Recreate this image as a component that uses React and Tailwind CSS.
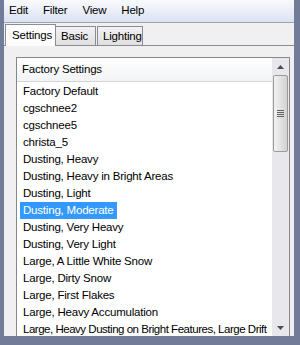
import React from "react";

const items = [
  "Factory Default",
  "cgschnee2",
  "cgschnee5",
  "christa_5",
  "Dusting, Heavy",
  "Dusting, Heavy in Bright Areas",
  "Dusting, Light",
  "Dusting, Moderate",
  "Dusting, Very Heavy",
  "Dusting, Very Light",
  "Large, A Little White Snow",
  "Large, Dirty Snow",
  "Large, First Flakes",
  "Large, Heavy Accumulation",
  "Large, Heavy Dusting on Bright Features, Large Drift",
];

export default function App() {
  return (
    <div
      className="w-[300px] h-[345px] bg-[#727c99] pl-[4px] pr-[6px] pb-[9px] flex flex-col overflow-hidden text-[11.5px] tracking-[-0.2px] text-black"
      style={{ fontFamily: '"Liberation Sans", Arial, sans-serif' }}
    >
      {/* menu bar */}
      <div className="h-[23px] shrink-0 flex items-center gap-[15px] pl-[5px] bg-gradient-to-b from-[#f9fafd] to-[#dbe2f3] border-b border-[#a0a4ad]">
        <span>Edit</span>
        <span>Filter</span>
        <span>View</span>
        <span>Help</span>
      </div>
      {/* tabs */}
      <div className="h-[23px] shrink-0 bg-[#f0f0f0] flex items-end pl-[1px] relative">
        <div className="absolute left-0 right-0 bottom-0 h-px bg-[#898c95]" />
        <div className="relative z-10 w-[51px] h-[22px] pl-[6px] flex items-center bg-[#fcfcfc] border border-b-0 border-[#898c95]">
          Settings
        </div>
        <div className="relative w-[40px] h-[19px] mb-px pl-[5px] pt-[2px] flex items-center bg-gradient-to-b from-[#f2f2f2] to-[#e0e0e0] border border-l-0 border-b-0 border-[#898c95]">
          Basic
        </div>
        <div className="relative w-[46px] h-[19px] mb-px ml-[1px] pl-[5px] pt-[2px] flex items-center bg-gradient-to-b from-[#f2f2f2] to-[#e0e0e0] border border-b-0 border-[#898c95]">
          Lighting
        </div>
      </div>
      {/* panel */}
      <div className="flex-1 bg-[#f0f0f0] pt-[11px] pl-[12px] pr-[4px] flex flex-col min-h-0">
        <div className="flex-1 bg-white border border-[#828790] border-b-0 flex min-h-0 overflow-hidden">
          <div className="flex-1 min-w-0 flex flex-col">
            <div className="h-[24px] shrink-0 flex items-center pl-[5px] bg-gradient-to-b from-[#ffffff] to-[#f2f3f5] border-b border-[#d5d5d5]">
              Factory Settings
            </div>
            <div className="pt-[1px] pl-[3px]">
              {items.map((t, i) => (
                <div key={t} className="h-[17px] flex items-center">
                  <span
                    className={
                      "px-[3px] h-[17px] leading-[17px] whitespace-nowrap " +
                      (t === "Dusting, Moderate" ? "bg-[#3399ff] text-white " : "") +
                      (i === items.length - 1 ? "tracking-[-0.48px]" : "")
                    }
                  >
                    {t}
                  </span>
                </div>
              ))}
            </div>
          </div>
          {/* scrollbar */}
          <div className="w-[17px] shrink-0 bg-[#e8e8ec] flex flex-col items-center">
            <div className="h-[17px] w-full flex items-center justify-center">
              <svg width="7" height="4" viewBox="0 0 7 4">
                <path d="M0 4 L3.5 0 L7 4 Z" fill="#4d4d4d" />
              </svg>
            </div>
            <div className="w-[15px] h-[77px] rounded-[2px] border border-[#9a9a9a] bg-gradient-to-r from-[#f2f2f2] via-[#e2e2e2] to-[#d2d2d2] flex items-center justify-center">
              <div className="flex flex-col gap-[1px]">
                <div className="w-[7px] h-px bg-[#606060]" />
                <div className="w-[7px] h-px bg-[#606060]" />
                <div className="w-[7px] h-px bg-[#606060]" />
                <div className="w-[7px] h-px bg-[#606060]" />
              </div>
            </div>
            <div className="flex-1" />
            <div className="h-[17px] w-full flex items-center justify-center">
              <svg width="7" height="4" viewBox="0 0 7 4">
                <path d="M0 0 L3.5 4 L7 0 Z" fill="#4d4d4d" />
              </svg>
            </div>
          </div>
        </div>
      </div>
    </div>
  );
}
